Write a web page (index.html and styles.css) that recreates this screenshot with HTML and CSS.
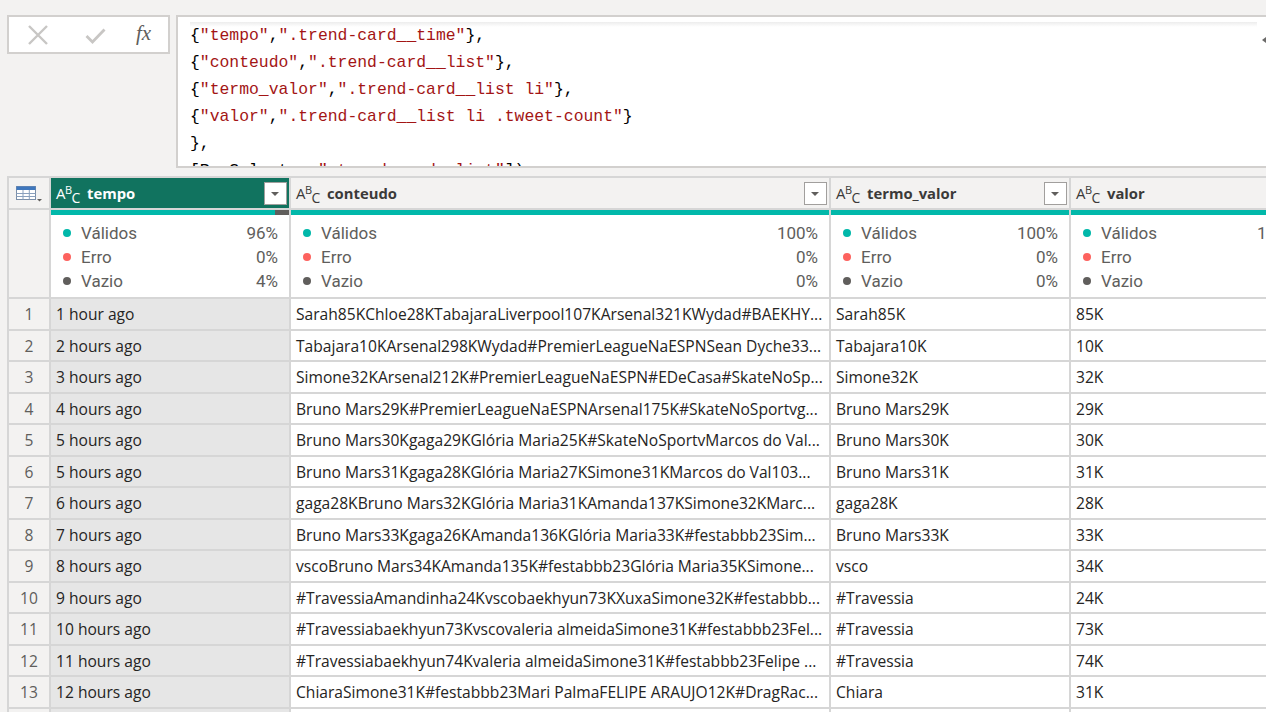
FILE: index.html
```html
<!DOCTYPE html>
<html lang="pt">
<head>
<meta charset="utf-8">
<title>Power Query</title>
<link rel="stylesheet" href="styles.css">
</head>
<body>
<div class="formula">
  <div class="actions">
    <svg class="ic-x" width="22" height="20" viewBox="0 0 22 20"><path d="M2 1 L20 19 M20 1 L2 19" stroke="#c8c6c4" stroke-width="2.4" fill="none"/></svg>
    <svg class="ic-ok" width="21" height="18" viewBox="0 0 21 18"><path d="M1.5 9 L7.5 15 L19.5 2.5" stroke="#c8c6c4" stroke-width="2.8" fill="none"/></svg>
    <span class="fx">fx</span>
  </div>
  <div class="editor-box">
    <div class="editor">
      <div class="ln"><b>{</b><s>"tempo"</s><b>,</b><s>".trend-card__time"</s><b>},</b></div>
      <div class="ln"><b>{</b><s>"conteudo"</s><b>,</b><s>".trend-card__list"</s><b>},</b></div>
      <div class="ln"><b>{</b><s>"termo_valor"</s><b>,</b><s>".trend-card__list li"</s><b>},</b></div>
      <div class="ln"><b>{</b><s>"valor"</s><b>,</b><s>".trend-card__list li .tweet-count"</s><b>}</b></div>
      <div class="ln"><b>},</b></div>
      <div class="ln"><b>[RowSelector=</b><s>".trend-card__list"</s><b>])</b></div>
    </div>
    <div class="collapse"></div>
  </div>
</div>

<div class="grid">
  <div class="hd corner">
    <svg width="28" height="18" viewBox="0 0 28 18"><rect x="0.5" y="0.5" width="19" height="13" fill="#fff" stroke="#7a8ea8"/><rect x="0.5" y="0.5" width="19" height="3.5" fill="#3f77bd"/><path d="M0.5 7.5 H19.5 M0.5 10.5 H19.5 M7 4 V13.5 M13.3 4 V13.5" stroke="#8aa0bd" stroke-width="1"/><path d="M21 13 H26 L23.5 15.5 Z" fill="#605e5c"/></svg>
  </div>
  <div class="hd sel"><span class="abc">A<sup>B</sup><sub>C</sub></span><span class="name">tempo</span><span class="dd"></span></div>
  <div class="hd"><span class="abc">A<sup>B</sup><sub>C</sub></span><span class="name">conteudo</span><span class="dd"></span></div>
  <div class="hd"><span class="abc">A<sup>B</sup><sub>C</sub></span><span class="name">termo_valor</span><span class="dd"></span></div>
  <div class="hd"><span class="abc">A<sup>B</sup><sub>C</sub></span><span class="name">valor</span><span class="dd"></span></div>

  <div class="rn stats-rn"></div>
  <div class="stats">
    <div class="bar"><span class="ok"></span><span class="empty"></span></div>
    <div class="st"><i class="dot g"></i>Válidos<span class="pct">96%</span></div>
    <div class="st"><i class="dot r"></i>Erro<span class="pct">0%</span></div>
    <div class="st"><i class="dot k"></i>Vazio<span class="pct">4%</span></div>
  </div>
  <div class="stats">
    <div class="bar"><span class="ok"></span></div>
    <div class="st"><i class="dot g"></i>Válidos<span class="pct">100%</span></div>
    <div class="st"><i class="dot r"></i>Erro<span class="pct">0%</span></div>
    <div class="st"><i class="dot k"></i>Vazio<span class="pct">0%</span></div>
  </div>
  <div class="stats">
    <div class="bar"><span class="ok"></span></div>
    <div class="st"><i class="dot g"></i>Válidos<span class="pct">100%</span></div>
    <div class="st"><i class="dot r"></i>Erro<span class="pct">0%</span></div>
    <div class="st"><i class="dot k"></i>Vazio<span class="pct">0%</span></div>
  </div>
  <div class="stats">
    <div class="bar"><span class="ok"></span></div>
    <div class="st"><i class="dot g"></i>Válidos<span class="pct">100%</span></div>
    <div class="st"><i class="dot r"></i>Erro<span class="pct">0%</span></div>
    <div class="st"><i class="dot k"></i>Vazio<span class="pct">0%</span></div>
  </div>

  <div class="rn">1</div><div class="c t">1 hour ago</div><div class="c">Sarah85KChloe28KTabajaraLiverpool107KArsenal321KWydad#BAEKHY...</div><div class="c">Sarah85K</div><div class="c">85K</div>
  <div class="rn">2</div><div class="c t">2 hours ago</div><div class="c">Tabajara10KArsenal298KWydad#PremierLeagueNaESPNSean Dyche33...</div><div class="c">Tabajara10K</div><div class="c">10K</div>
  <div class="rn">3</div><div class="c t">3 hours ago</div><div class="c">Simone32KArsenal212K#PremierLeagueNaESPN#EDeCasa#SkateNoSp...</div><div class="c">Simone32K</div><div class="c">32K</div>
  <div class="rn">4</div><div class="c t">4 hours ago</div><div class="c">Bruno Mars29K#PremierLeagueNaESPNArsenal175K#SkateNoSportvg...</div><div class="c">Bruno Mars29K</div><div class="c">29K</div>
  <div class="rn">5</div><div class="c t">5 hours ago</div><div class="c">Bruno Mars30Kgaga29KGlória Maria25K#SkateNoSportvMarcos do Val...</div><div class="c">Bruno Mars30K</div><div class="c">30K</div>
  <div class="rn">6</div><div class="c t">5 hours ago</div><div class="c">Bruno Mars31Kgaga28KGlória Maria27KSimone31KMarcos do Val103...</div><div class="c">Bruno Mars31K</div><div class="c">31K</div>
  <div class="rn">7</div><div class="c t">6 hours ago</div><div class="c">gaga28KBruno Mars32KGlória Maria31KAmanda137KSimone32KMarc...</div><div class="c">gaga28K</div><div class="c">28K</div>
  <div class="rn">8</div><div class="c t">7 hours ago</div><div class="c">Bruno Mars33Kgaga26KAmanda136KGlória Maria33K#festabbb23Sim...</div><div class="c">Bruno Mars33K</div><div class="c">33K</div>
  <div class="rn">9</div><div class="c t">8 hours ago</div><div class="c">vscoBruno Mars34KAmanda135K#festabbb23Glória Maria35KSimone...</div><div class="c">vsco</div><div class="c">34K</div>
  <div class="rn">10</div><div class="c t">9 hours ago</div><div class="c">#TravessiaAmandinha24Kvscobaekhyun73KXuxaSimone32K#festabbb...</div><div class="c">#Travessia</div><div class="c">24K</div>
  <div class="rn">11</div><div class="c t">10 hours ago</div><div class="c">#Travessiabaekhyun73Kvscovaleria almeidaSimone31K#festabbb23Fel...</div><div class="c">#Travessia</div><div class="c">73K</div>
  <div class="rn">12</div><div class="c t">11 hours ago</div><div class="c">#Travessiabaekhyun74Kvaleria almeidaSimone31K#festabbb23Felipe ...</div><div class="c">#Travessia</div><div class="c">74K</div>
  <div class="rn">13</div><div class="c t">12 hours ago</div><div class="c">ChiaraSimone31K#festabbb23Mari PalmaFELIPE ARAUJO12K#DragRac...</div><div class="c">Chiara</div><div class="c">31K</div>
  <div class="rn">14</div><div class="c t">13 hours ago</div><div class="c">ChiaraSimone30K#festabbb23Mari Palma...</div><div class="c">Chiara</div><div class="c">30K</div>
</div>
</body>
</html>
```

FILE: styles.css
```css
* { box-sizing: border-box; margin: 0; padding: 0; }
html, body { width: 1266px; height: 712px; overflow: hidden; }
body {
  background: #f3f2f1;
  font-family: "Open Sans", "Segoe UI", sans-serif;
  color: #252423;
}

/* formula bar */
.formula {
  display: flex;
  align-items: flex-start;
  height: 168px;
  padding: 15px 0 0 7px;
}
.actions {
  width: 163px;
  height: 39px;
  border: 2px solid #d2d0ce;
  background: #fff;
  display: flex;
  align-items: center;
}
.ic-x { margin-left: 18px; }
.ic-ok { margin-left: 36px; margin-top: 2px; }
.fx {
  margin-left: 30px;
  font-family: "Liberation Serif", serif;
  font-style: italic;
  font-size: 21px;
  color: #605e5c;
  line-height: 1;
  margin-top: -3px;
}
.editor-box {
  flex: 1;
  margin-left: 6px;
  height: 153px;
  border: 2px solid #d2d0ce;
  border-right: none;
  background: #fff;
  display: flex;
  overflow: hidden;
}
.editor {
  width: 1067px;
  margin: 5px 0 0 12px;
  background: linear-gradient(#ededed, #fff 5px);
  font-family: "Liberation Mono", monospace;
  font-size: 16.4px;
  line-height: 27px;
}
.ln { white-space: pre; height: 27px; }
.editor b { font-weight: normal; color: #000; }
.editor s { text-decoration: none; color: #a31515; }
.collapse {
  margin: 20px 0 0 5px;
  width: 0;
  height: 0;
  border-top: 3px solid transparent;
  border-bottom: 3px solid transparent;
  border-right: 4px solid #6b6a69;
}

/* grid */
.grid {
  display: grid;
  grid-template-columns: 40px 238px 538px 238px 238px;
  grid-template-rows: 30px 87px;
  grid-auto-rows: 29.5px;
  gap: 2px;
  width: max-content;
  margin: 8px 0 0 7px;
  background: #d6d6d6;
  border-top: 2px solid #d6d6d6;
  border-left: 2px solid #d6d6d6;
}
.hd {
  background: #f3f2f1;
  display: flex;
  align-items: center;
  padding-left: 5px;
  color: #3b3a39;
}
.hd.corner { justify-content: center; padding: 4px 0 0 2px; }
.hd.sel { background: #11735f; color: #fff; }
.abc {
  font-family: "Open Sans", sans-serif;
  font-size: 15px;
  width: 21px;
  white-space: nowrap;
  line-height: 1;
  margin-top: 1px;
  letter-spacing: -0.5px;
}
.abc sup { font-size: 11px; vertical-align: 5px; line-height: 0; }
.abc sub { font-size: 14px; vertical-align: -4px; line-height: 0; }
.name {
  margin-left: 10px;
  font-weight: 700;
  font-size: 14.8px;
}
.dd {
  margin-left: auto;
  margin-right: 2px;
  width: 23px;
  height: 23px;
  background: #fff;
  border: 1px solid #a19f9d;
  position: relative;
}
.dd::after {
  content: "";
  position: absolute;
  left: 6px;
  top: 9px;
  border-left: 4.5px solid transparent;
  border-right: 4.5px solid transparent;
  border-top: 4.5px solid #605e5c;
}

.stats { background: #fff; }
.stats-rn { background: #f3f2f1; }
.bar { height: 5px; display: flex; margin-bottom: 6px; }
.bar .ok { flex: 1; background: #01b8aa; }
.bar .empty { width: 14px; background: #605e5c; }
.st {
  display: flex;
  align-items: center;
  height: 24px;
  line-height: 24px;
  padding: 0 11px 0 12px;
  font-family: Roboto, sans-serif;
  font-size: 17px;
  color: #605e5c;
}
.dot {
  width: 8px;
  height: 8px;
  border-radius: 50%;
  margin-right: 10px;
}
.dot.g { background: #01b8aa; }
.dot.r { background: #fd625e; }
.dot.k { background: #605e5c; }
.pct { margin-left: auto; }

.rn {
  background: #f3f2f1;
  color: #605e5c;
  font-size: 15.6px;
  text-align: center;
  line-height: 29.5px;
  padding-top: 1px;
  overflow: hidden;
}
.c {
  background: #fff;
  font-size: 15.6px;
  line-height: 29.5px;
  padding: 1px 0 0 5px;
  white-space: nowrap;
  overflow: hidden;
  text-overflow: ellipsis;
}
.c.t { background: #e6e6e6; }
```
